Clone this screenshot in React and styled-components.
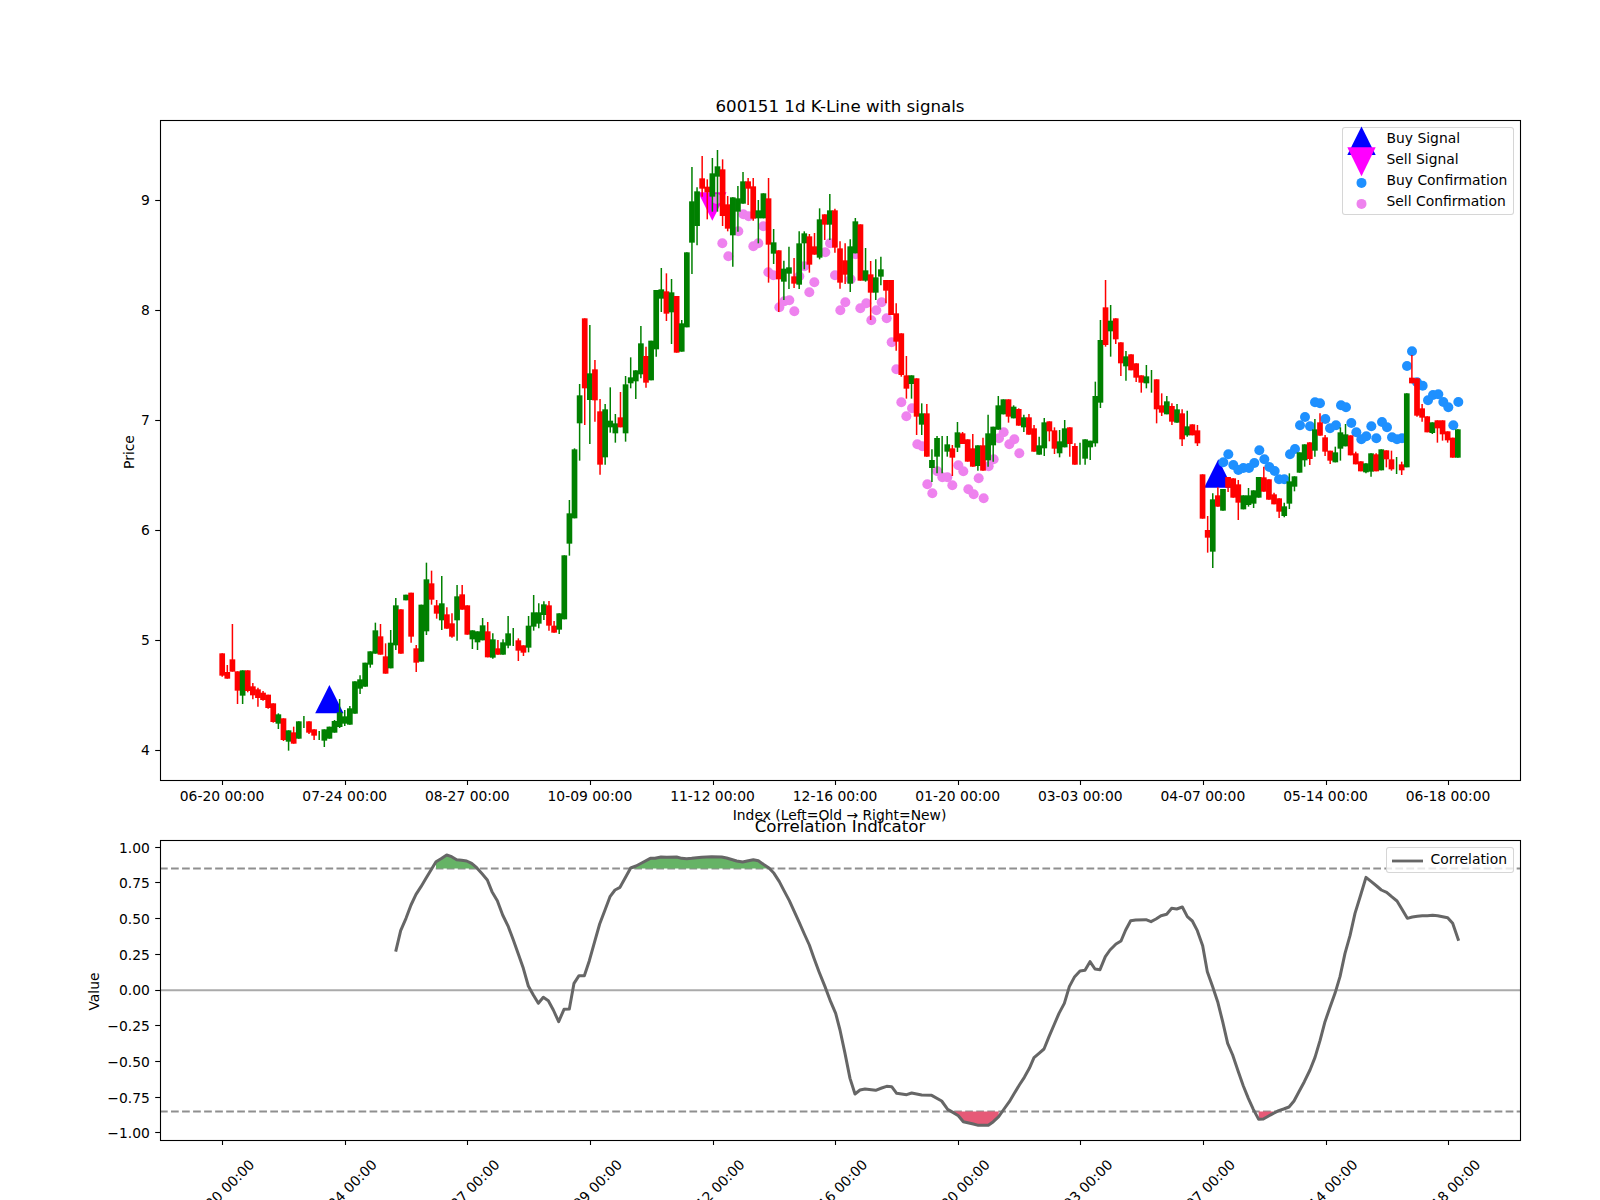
import React from 'react';
import styled, { createGlobalStyle } from 'styled-components';

const Global = createGlobalStyle`
  html, body { margin: 0; padding: 0; background: #fff; }
`;

const FONT = '"DejaVu Sans", "Liberation Sans", sans-serif';

const Figure = styled.div`
  width: 1600px;
  height: 1200px;
  overflow: hidden;
  display: flex;
  flex-direction: column;
  background: #fff;
  font-family: ${FONT};
  color: #000;
`;
const PlotArea = styled.section`
  position: relative;
  width: 1600px;
  height: ${p => p.$h}px;
  flex: none;
`;
const PlotSvg = styled.svg`
  display: block;
  width: 1600px;
  height: ${p => p.$h}px;
  overflow: visible;
`;
const Spine = styled.rect`
  fill: none;
  stroke: #000;
  stroke-width: 1.1;
`;
const Tick = styled.line`
  stroke: #000;
  stroke-width: 1.1;
`;
const TickLabel = styled.text`
  font-family: ${FONT};
  font-size: 13.89px;
  fill: #000;
  text-anchor: ${p => p.$anchor || 'middle'};
`;
const AxisTitle = styled.text`
  font-family: ${FONT};
  font-size: 16.67px;
  fill: #000;
  text-anchor: middle;
`;
const Wick = styled.line`
  stroke: ${p => (p.$up ? '#ff0000' : '#008000')};
  stroke-width: 1.5;
`;
const Body = styled.rect`
  fill: ${p => (p.$up ? '#ff0000' : '#008000')};
`;
const Dot = styled.circle`
  fill: ${p => p.$c};
`;
const Signal = styled.polygon`
  fill: ${p => p.$c};
`;
const GuideLine = styled.line`
  stroke: ${p => (p.$dash ? '#8f8f8f' : '#aaaaaa')};
  stroke-width: 2;
  stroke-dasharray: ${p => (p.$dash ? '7.7 3.33' : 'none')};
`;
const CorrLine = styled.polyline`
  fill: none;
  stroke: #666;
  stroke-width: 3;
  stroke-linejoin: round;
`;
const LegendLine = styled.line`
  stroke: #666;
  stroke-width: 2.8;
`;
const Zone = styled.polygon`
  fill: ${p => p.$c};
`;
const Legend = styled.div`
  position: absolute;
  top: ${p => p.$top}px;
  right: 86.5px;
  box-sizing: border-box;
  height: ${p => p.$h}px;
  width: ${p => p.$w}px;
  background: rgba(255, 255, 255, 0.8);
  border: 1.1px solid rgba(204, 204, 204, 0.8);
  border-radius: 3px;
  display: flex;
  flex-direction: column;
`;
const LegendRow = styled.div`
  display: flex;
  align-items: center;
  height: ${p => p.$h || 21}px;
  font-size: 13.89px;
  line-height: 21px;
  white-space: nowrap;
`;
const Handle = styled.svg`
  width: 37px;
  height: 21px;
  flex: none;
  overflow: visible;
  margin-right: 6.6px;
`;

const X0 = 222.2;
const DX = 5.106;
const xOf = i => X0 + DX * i;
const TICK0 = 222.7;
const TICKSTEP = 122.6;

const chunk = (oy, rows) =>
  rows.map(([c, bt, bb, wt = bt, wb = bb]) => ({
    up: c === 'r',
    bt: oy + bt / 3,
    bb: oy + bb / 3,
    wt: oy + wt / 3,
    wb: oy + wb / 3,
  }));
const at = (ox, oy, pts) => pts.map(([x, y]) => [ox + x / 3, oy + y / 3]);

const candles = [
  ...chunk(500, [
    ['r',460,527,460,530],['r',516,536,495,536],['r',478,515,372,515],['r',514,572,514,612],['g',511,587,511,612],
    ['r',511,573,511,577],['r',559,586,549,598],['r',568,594,563,620],['r',578,600,573,602],['r',584,624,584,626],
    ['r',610,666,610,668],['g',643,671,640,687],['r',655,720,655,723],['g',691,725,691,752],['r',697,731,680,731],
    ['g',664,716],['g',666,666,648,684],['r',664,698,664,702],['r',688,707,688,720],['g',706,706,693,720],
    ['g',688,722,688,741],['g',680,716],['g',663,698,660,698],['g',637,681,597,684],['g',649,671,630,678],
    ['g',625,674,618,674],['g',544,641],['g',538,566,526,582],['g',488,560],['g',454,494,454,503],
    ['g',391,461,368,461],['r',409,464,372,464],['r',469,521,430,521],['g',428,505,390,505],['g',316,436,294,450],
    ['r',328,461],['g',284,301],['r',278,410,278,428],['r',445,488,435,516],['g',314,485],
    ['g',238,394,188,405],['r',250,299,212,314],['r',316,341,300,356],['g',310,361,228,390],['r',343,386,322,386],
    ['r',370,410,340,413],['g',289,361,255,422],['r',283,329,255,329],['r',316,404],['g',391,418,391,447],
    ['g',394,427,394,450],['g',376,421,354,421],['r',394,472,366,472],['g',418,473,400,476],['r',445,464,420,464],
    ['g',427,464,418,464],['g',400,437,348,445],['g',411,411,384,438],['r',421,452,415,483],['r',436,458,436,468],
    ['g',377,443,348,457],['g',337,380,285,392],['g',337,371,310,385],['g',313,345,304,360],['r',316,377,303,392],
    ['r',377,398,363,398],['g',340,389,340,402],['g',166,358],['g',40,131,0,167],
  ]),
  ...chunk(300, [
    ['g',448,655,445,655],['g',286,370,252,482],['r',55,265,55,375],['g',220,300,75,432],['r',208,301,180,365],
    ['r',334,494,297,524],['g',328,472,312,494],['g',362,382,262,398],['g',370,400,342,428],['r',352,382,276,382],
    ['g',253,400,228,425],['g',232,250,172,265],['g',211,244,211,297],['g',130,223,78,235],['r',168,248,140,263],
    ['g',122,241],['g',-30,148,-30,170],
  ]),
  ...chunk(130, [
    ['g',478,506,414,546],['r',484,551,430,573],['g',487,547,447,642],['r',498,668],['g',580,665,570,665],
    ['g',367,592],['g',214,338,111,432],['g',184,288,172,346],['r',145,176,78,200],['r',170,187,148,268],
    ['g',130,200,84,245],['g',109,140,60,245],['r',118,258,88,288],['r',223,296,198,304],['g',202,316,202,410],
    ['g',205,245,168,305],['g',154,221,126,221],['r',154,176,144,225],['r',169,266,144,272],['g',241,265,210,340],
    ['g',190,265],['r',205,344,144,458],['g',337,371,297,402],['r',361,448,361,546],['g',416,455,392,510],
    ['g',412,431,350,477],['r',439,461,384,474],['g',340,464,304,477],['g',310,340,304,418],['r',319,404,312,428],
    ['r',349,374,309,374],['g',268,383,235,388],['r',253,284,253,330],['g',241,284,192,330],['r',241,353,236,368],
    ['r',355,458,334,476],['r',391,434,340,462],['g',349,461,328,486],['g',274,370,264,370],['r',283,452],
    ['g',421,452,354,455],['r',433,488,393,570],['g',442,488,388,510],
  ]),
  ...chunk(260, [
    ['g',28,50,-10,76],['r',60,92,60,130],['r',60,165],['r',160,245,130,272],['r',220,345,220,350],
    ['r',346,386,288,416],['g',346,372,346,416],['r',355,470,355,525],['g',460,494,430,525],['r',460,590,432,590],
    ['g',600,624,568,666],['g',534,590,528,640],['g',584,584,528,640],['g',553,575,528,590],['r',565,593,555,648],
    ['g',517,563,486,576],['r',520,552,516,552],['r',538,605],['r',565,620,522,620],['g',556,618,556,632],
    ['r',556,632,533,632],['g',520,601,464,620],['g',500,556,500,605],['g',436,509,408,509],['g',418,463],
    ['r',418,470,418,488],['g',440,475,436,475],['r',447,497,445,497],['g',472,502,464,516],['r',472,524,462,524],
    ['r',505,575,495,575],['g',556,584,530,584],['g',487,565,474,588],['r',484,514,484,544],['r',511,566,502,582],
    ['g',544,580,510,592],['g',505,562,480,562],['r',502,552,502,590],['r',558,614,550,614],['g',580,580,548,614],
    ['g',538,596,538,614],['g',542,562,542,600],['g',408,550,365,560],['g',240,428,180,444],['r',142,255,60,260],
    ['g',182,214,135,290],['r',175,238,175,252],['r',247,310,247,348],['g',289,319,273,362],['r',283,331],
    ['r',310,353,310,366],['r',346,368,346,398],['g',349,370,315,385],['g',364,364,330,398],['r',358,448,358,490],
    ['r',436,458,400,468],['g',424,463,408,463],['r',438,485,430,495],['g',448,488,432,488],['r',460,538,448,558],
    ['g',499,526,452,530],['r',493,526],['r',511,550,495,558],
  ]),
  ...chunk(330, [
    ['r',433,566],['r',600,623,558,668],['g',508,665,490,714],['r',496,530,472,530],['g',477,542],
    ['r',441,473,441,486],['r',445,503],['r',463,518,450,570],['g',496,538],['g',496,525,474,530],
    ['g',481,521,481,534],['g',441,503],['r',442,485,410,485],['r',448,509],['r',493,523,488,523],
    ['r',505,545,505,564],['g',529,558,518,562],['g',454,521,430,537],['g',439,470,439,484],['g',367,428],
    ['g',343,391,343,410],['r',337,387,337,405],['g',298,362,267,380],['r',277,317,250,317],['r',322,365,315,378],
    ['r',362,392,362,402],['g',367,397,350,397],['g',307,356,292,392],['g',313,349,282,349],['r',316,376],
    ['r',370,403,365,403],['r',394,424],['g',400,427,400,430],['g',370,425,370,440],['r',373,424,370,424],
    ['g',358,421],['r',361,388,361,412],['r',388,418,362,422],['g',410,410,381,432],['r',403,421,395,435],
    ['g',190,412],['r',143,160,75,160],['r',145,257,145,260],['r',235,263,222,275],['r',259,307],
    ['g',277,309,277,312],['r',271,295,271,338],['r',271,313,271,332],['r',304,331,304,338],['r',323,383],
    ['g',298,383],
  ]),
];

const buyDots = at(1180, 330, [
  [130,397],[145,373],[160,405],[175,420],[190,414],[207,414],[223,399],[238,361],[253,388],[268,411],[284,423],
  [297,448],[313,448],[330,373],[345,357],[360,286],[375,261],[390,289],[405,217],[420,220],[436,267],[450,295],
  [468,286],[483,226],[498,232],[514,279],[529,307],[544,328],[559,319],[574,289],[589,325],[606,276],[621,292],
  [636,322],[651,328],[666,325],[681,108],[696,64],[711,157],[728,167],[744,211],[759,195],[775,193],[790,216],
  [805,232],[820,286],[835,216],
]);
const sellDots = [
  ...at(550, 130, [
    [500,207],[517,340],[535,379],[565,304],[580,253],[596,259],[610,349],[625,340],[640,289],[655,427],[670,436],
    [688,532],[703,514],[718,511],[733,544],[748,439],[763,409],[778,487],[793,457],[826,367],[840,340],[855,436],
    [871,541],[886,517],[902,448],[917,373],[931,535],[949,520],[964,571],[979,541],
  ]),
  ...at(880, 260, [
    [5,127],[20,175],[35,247],[49,328],[64,427],[79,469],[96,445],[112,553],[127,559],[142,673],[157,700],[172,634],
    [187,652],[202,652],[217,676],[235,616],[250,634],[265,688],[281,703],[296,655],[311,715],[326,619],[341,598],
    [357,535],[371,517],[388,553],[403,538],[418,580],
  ]),
];

const corr = [
  ...at(80, 770, [
    [947,545],[962,482],[978,445],[993,405],[1008,373],[1023,350],[1038,325],[1053,300],[1068,275],[1083,266],
    [1100,255],[1115,260],[1130,269],[1145,271],[1160,273],[1175,280],[1190,293],[1205,310],[1222,330],[1236,365],
    [1252,392],[1268,435],[1285,470],[1300,510],[1316,555],[1330,595],[1345,648],[1360,675],[1375,700],[1390,682],
    [1405,692],[1420,720],[1436,755],[1452,718],[1468,717],[1482,640],[1497,617],
  ]),
  ...at(560, 770, [
    [73,617],[88,572],[104,515],[119,462],[135,420],[150,380],[165,360],[180,352],[195,325],[212,294],[228,288],
    [245,279],[271,265],[285,265],[303,261],[320,262],[350,261],[365,265],[380,266],[395,265],[425,262],[455,260],
    [485,261],[500,264],[530,273],[548,276],[565,272],[580,269],[595,272],[610,283],[627,294],[642,310],[658,335],
    [672,362],[688,392],[703,425],[718,458],[733,492],[748,525],[762,565],[777,605],[795,650],[812,695],[827,730],
    [840,780],[855,850],[870,925],[885,972],[900,960],[915,957],[947,961],[965,954],[980,949],[995,950],[1010,970],
    [1040,974],[1055,969],[1085,975],[1115,976],[1145,993],[1163,1018],[1180,1028],[1195,1037],[1210,1055],
    [1240,1062],[1255,1066],[1285,1066],[1300,1055],[1316,1040],[1330,1020],[1348,995],[1363,970],[1378,945],
    [1393,922],[1408,895],[1422,863],[1437,850],[1452,837],[1467,800],
  ]),
  ...at(1040, 770, [
    [42,765],[57,730],[73,700],[88,650],[104,620],[120,603],[135,601],[150,575],[165,597],[180,599],[196,560],
    [210,540],[228,522],[243,513],[257,480],[272,452],[287,450],[318,449],[333,455],[348,447],[363,437],[380,433],
    [395,415],[410,417],[427,411],[442,440],[457,453],[472,482],[488,527],[502,605],[518,650],[533,695],[548,755],
    [563,820],[578,855],[595,905],[610,948],[625,985],[640,1018],[656,1048],[670,1047],[686,1038],[700,1030],
    [716,1022],[731,1017],[747,1011],[762,993],[778,963],[793,935],[810,900],[825,862],[840,812],[855,755],
    [870,712],[885,670],[900,620],[915,550],[930,497],[945,430],[962,375],[978,322],[994,335],[1010,348],
    [1024,360],[1040,367],[1055,380],[1071,393],[1086,418],[1102,445],[1117,441],[1132,439],[1147,437],[1162,437],
    [1178,436],[1193,437],[1208,440],[1223,443],[1238,460],[1256,512],
  ]),
];

const Y_HI = 990 - 0.85 * 142.8;
const Y_LO = 990 + 0.85 * 142.8;

const zones = (test, level) => {
  const out = [];
  let cur = [];
  corr.forEach(p => {
    if (test(p[1])) cur.push(p);
    else {
      if (cur.length > 1) out.push(cur);
      cur = [];
    }
  });
  return out.map(seg => {
    const first = seg[0][0];
    const last = seg[seg.length - 1][0];
    return [[first, level], ...seg, [last, level]].map(p => p.join(',')).join(' ');
  });
};
const greenZones = zones(y => y < Y_HI, Y_HI);
const redZones = zones(y => y > Y_LO, Y_LO);

const DATES = ['06-20', '07-24', '08-27', '10-09', '11-12', '12-16', '01-20', '03-03', '04-07', '05-14', '06-18'].map(
  d => `${d} 00:00`
);
const snap = v => Math.floor(v) + 0.5;
const tickXs = DATES.map((_, k) => TICK0 + TICKSTEP * k);
const PRICES = [4, 5, 6, 7, 8, 9];
const VALUES = [1, 0.75, 0.5, 0.25, 0, -0.25, -0.5, -0.75, -1];
const fmt = v => (v < 0 ? '\u2212' : '') + Math.abs(v).toFixed(2);

const tri = (cx, base, apex) => `${cx - 14.2},${base} ${cx + 14.2},${base} ${cx},${apex}`;

const Marker = ({ kind }) => (
  <Handle viewBox="-18.5 -10.5 37 21">
    {kind === 'buy' && <Signal $c="#0000ff" points={tri(0, 16.6, -12.1)} />}
    {kind === 'sell' && <Signal $c="#ff00ff" points={tri(0, -12.3, 16.7)} />}
    {kind === 'buyDot' && <Dot $c="#1e90ff" cx="0" cy="2.4" r="5" />}
    {kind === 'sellDot' && <Dot $c="#ee82ee" cx="0" cy="2.4" r="5" />}
  </Handle>
);

export default function App() {
  return (
    <Figure>
      <Global />
      <PlotArea $h={820}>
        <PlotSvg $h={820} viewBox="0 0 1600 820">
          <AxisTitle x="840" y="111.7">600151 1d K-Line with signals</AxisTitle>
          <Signal $c="#0000ff" points={tri(329.4, 713.3, 685)} />
          <Signal $c="#0000ff" points={tri(1218.3, 487.7, 459.3)} />
          <Signal $c="#ff00ff" points={tri(712.3, 192.3, 220.7)} />
          {buyDots.map(([x, y], i) => <Dot key={i} $c="#1e90ff" cx={x} cy={y} r="5" />)}
          {sellDots.map(([x, y], i) => <Dot key={i} $c="#ee82ee" cx={x} cy={y} r="5" />)}
          {candles.map((c, i) => (
            <g key={i}>
              <Wick $up={c.up} x1={xOf(i)} x2={xOf(i)} y1={c.wt} y2={c.wb} />
              {c.bb > c.bt && (
                <Body $up={c.up} x={xOf(i) - 2.85} width="5.7" y={c.bt} height={c.bb - c.bt} />
              )}
            </g>
          ))}
          <Spine x="160.5" y="120.5" width="1360" height="660" />
          {tickXs.map((x, k) => (
            <g key={k}>
              <Tick x1={snap(x)} x2={snap(x)} y1="780" y2="785" />
              <TickLabel x={x - 0.6} y="801">{DATES[k]}</TickLabel>
            </g>
          ))}
          {PRICES.map(p => {
            const y = 750 - (p - 4) * 110;
            return (
              <g key={p}>
                <Tick x1="155.2" x2="160" y1={snap(y)} y2={snap(y)} />
                <TickLabel $anchor="end" x="149.8" y={y + 5}>{p}</TickLabel>
              </g>
            );
          })}
          <TickLabel x="839.5" y="820">Index (Left=Old → Right=New)</TickLabel>
          <TickLabel x="133.5" y="452" transform="rotate(-90 133.5 452)">Price</TickLabel>
        </PlotSvg>
        <Legend $top={127.3} $h={88} $w={171.6}>
          <LegendRow $h={20.8}><Marker kind="buy" />Buy Signal</LegendRow>
          <LegendRow $h={20.8}><Marker kind="sell" />Sell Signal</LegendRow>
          <LegendRow $h={20.8}><Marker kind="buyDot" />Buy Confirmation</LegendRow>
          <LegendRow $h={20.8}><Marker kind="sellDot" />Sell Confirmation</LegendRow>
        </Legend>
      </PlotArea>
      <PlotArea $h={380}>
        <PlotSvg $h={380} viewBox="0 820 1600 380">
          <AxisTitle x="840" y="831.7">Correlation Indicator</AxisTitle>
          <GuideLine x1="160" x2="1520" y1="990.3" y2="990.3" />
          <GuideLine $dash x1="160" x2="1520" y1={Y_HI} y2={Y_HI} />
          <GuideLine $dash x1="160" x2="1520" y1={Y_LO} y2={Y_LO} />
          {greenZones.map((pts, i) => <Zone key={i} $c="#66b366" points={pts} />)}
          {redZones.map((pts, i) => <Zone key={i} $c="#e65a77" points={pts} />)}
          <CorrLine points={corr.map(p => p.join(',')).join(' ')} />
          <Spine x="160.5" y="840.5" width="1360" height="300" />
          {tickXs.map((x, k) => (
            <g key={k}>
              <Tick x1={snap(x)} x2={snap(x)} y1="1140" y2="1145" />
              <TickLabel x={x - 1} y="1197" transform={`rotate(-45 ${x - 1} 1192)`}>{DATES[k]}</TickLabel>
            </g>
          ))}
          {VALUES.map(v => {
            const y = 990 - v * 142.8;
            return (
              <g key={v}>
                <Tick x1="155.2" x2="160" y1={snap(y)} y2={snap(y)} />
                <TickLabel $anchor="end" x="149.8" y={y + 5.4}>{fmt(v)}</TickLabel>
              </g>
            );
          })}
          <TickLabel x="99" y="991.5" transform="rotate(-90 99 991.5)">Value</TickLabel>
        </PlotSvg>
        <Legend $top={27.3} $h={25.6} $w={127.6}>
          <LegendRow $h={21.5}>
            <Handle viewBox="-18.5 -10.5 37 21">
              <LegendLine x1="-13.5" x2="17.5" y1="1.5" y2="1.5" />
            </Handle>
            Correlation
          </LegendRow>
        </Legend>
      </PlotArea>
    </Figure>
  );
}
